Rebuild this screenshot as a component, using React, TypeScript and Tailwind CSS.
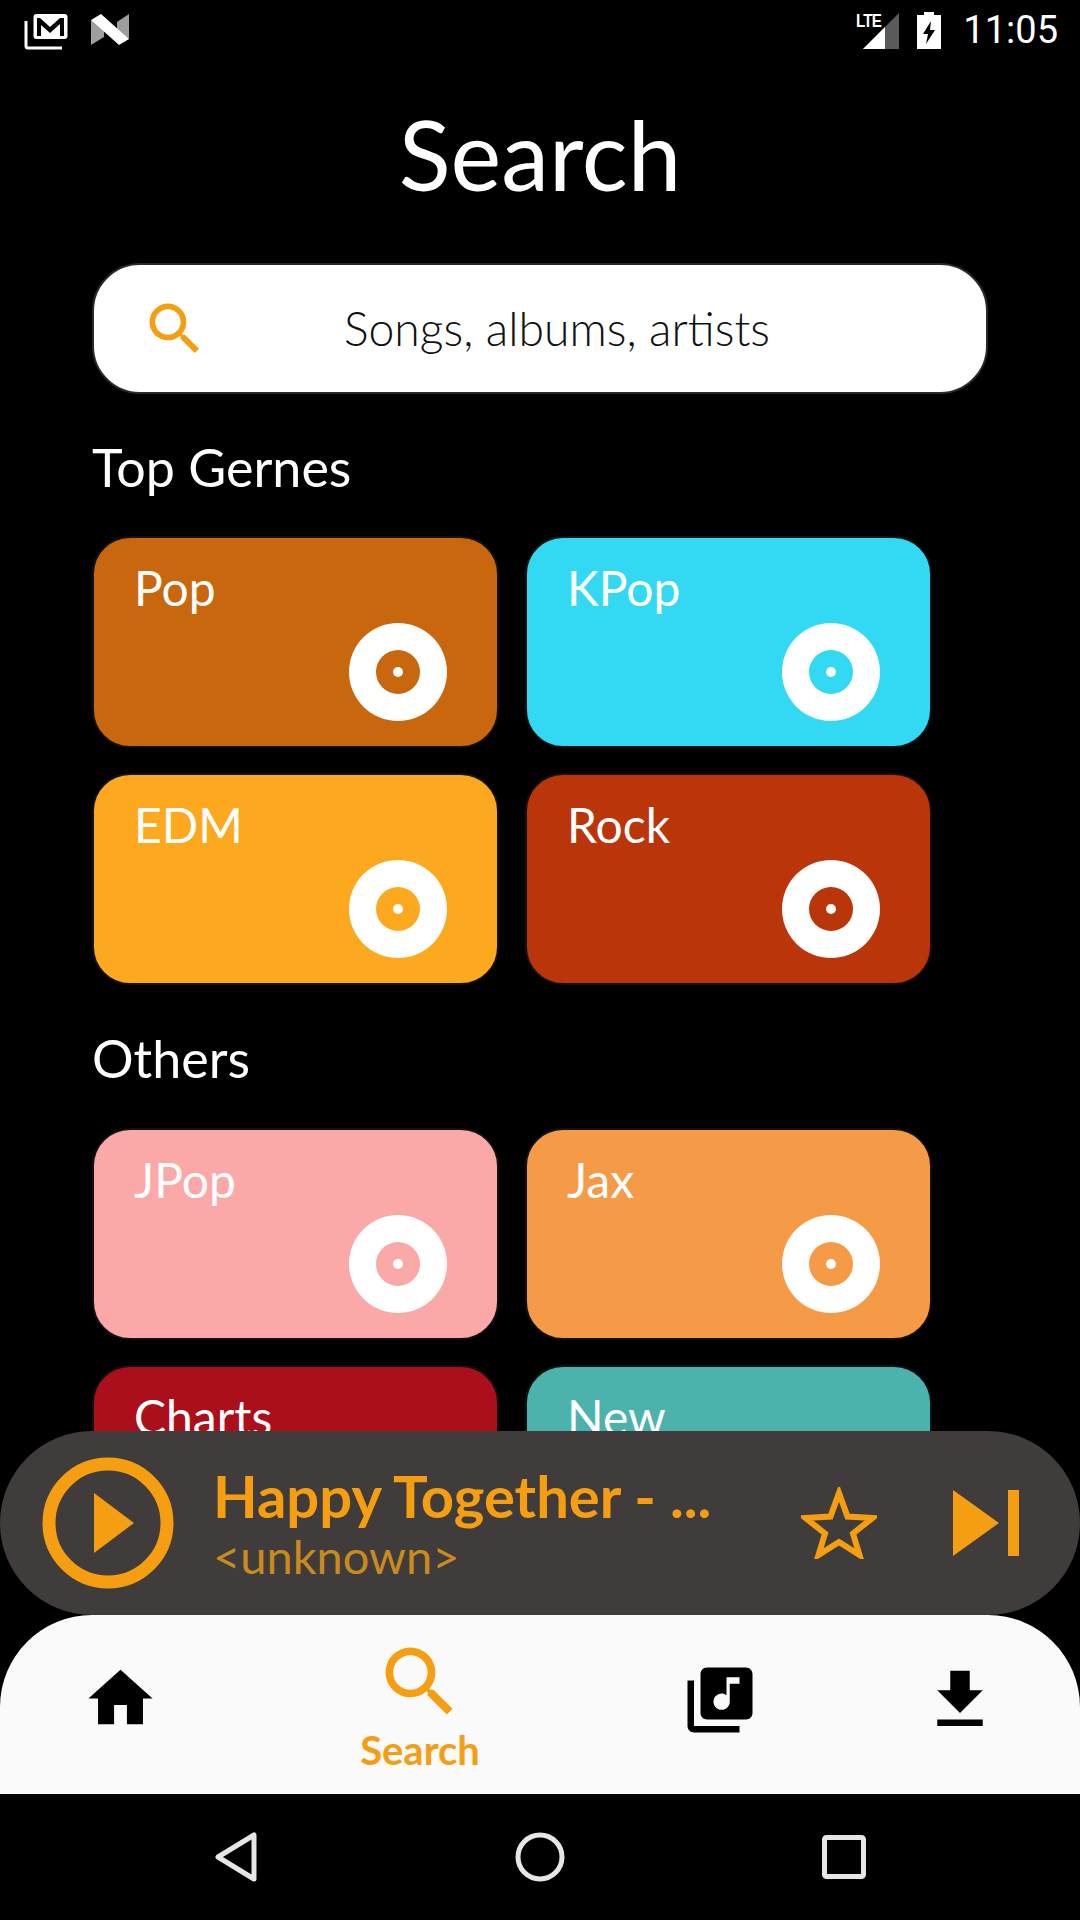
import React from 'react';

const topGenres = [
  { name: 'Pop', bg: 'bg-[#c8670d]', hole: 'bg-[#c8670d]' },
  { name: 'KPop', bg: 'bg-[#33d9f3]', hole: 'bg-[#33d9f3]' },
  { name: 'EDM', bg: 'bg-[#fda91f]', hole: 'bg-[#fda91f]' },
  { name: 'Rock', bg: 'bg-[#bb350a]', hole: 'bg-[#bb350a]' },
];

const otherGenres = [
  { name: 'JPop', bg: 'bg-[#fba8a8]', hole: 'bg-[#fba8a8]' },
  { name: 'Jax', bg: 'bg-[#f59b48]', hole: 'bg-[#f59b48]' },
  { name: 'Charts', bg: 'bg-[#ab0f1b]', hole: 'bg-[#ab0f1b]' },
  { name: 'New', bg: 'bg-[#4cb3ac]', hole: 'bg-[#4cb3ac]' },
];

const SEARCH_PATH =
  'M15.5 14h-.79l-.28-.27A6.47 6.47 0 0 0 16 9.5 6.5 6.5 0 1 0 9.5 16c1.61 0 3.09-.59 4.23-1.57l.27.28v.79l5 4.99L20.49 19l-4.99-5zm-6 0C7.01 14 5 11.99 5 9.5S7.01 5 9.5 5 14 7.01 14 9.5 11.99 14 9.5 14z';

const GenreCard: React.FC<{ name: string; bg: string; hole: string }> = ({ name, bg, hole }) => (
  <div className={`h-[212px] rounded-[38px] border-2 border-[#111111] ${bg} pl-[40px] pr-[50px] pt-[22px] flex flex-col`}>
    <span className="text-[48px] leading-[56px] text-white">{name}</span>
    <div className="mt-[7px] self-end w-[98px] h-[98px] rounded-full bg-white flex items-center justify-center">
      <div className={`w-[44px] h-[44px] rounded-full ${hole} flex items-center justify-center`}>
        <div className="w-[10px] h-[10px] rounded-full bg-white"></div>
      </div>
    </div>
  </div>
);

const StatusBar: React.FC = () => (
  <div className="h-[60px] shrink-0 flex items-center justify-between bg-black pl-[24px] pr-[22px]">
    <div className="flex items-center gap-[21px]">
      {/* stacked mail */}
      <svg width="46" height="38" viewBox="0 0 46 38" className="mt-[2px]">
        <path d="M2 9v25q0 2 2 2h34" fill="none" stroke="#fff" strokeWidth="3" />
        <rect x="9.500" y="2" width="34" height="25" rx="3" fill="#fff" />
        <path d="M13 6h3l10 9 10-9h4v18h-4V12l-10 9-9-8v11h-4z" fill="#000" />
      </svg>
      {/* N logo */}
      <svg width="38" height="31" viewBox="0 0 38 31" className="mt-[-2px]">
        <path d="M0 6v25l13-8V14z" fill="#9e9e9e" />
        <path d="M38 0v25L26 17V8z" fill="#9e9e9e" />
        <path d="M0 6l10-6 28 25-10 6z" fill="#fff" />
      </svg>
    </div>
    <div className="flex items-center">
      <div className="relative w-[46px] h-[37px] mr-[18px]">
        <svg width="36" height="36" viewBox="0 0 36 36" className="absolute right-0 bottom-0">
          <path d="M0 36L36 0v36z" fill="#5a5a5a" />
          <path d="M0 36l22-22v22z" fill="#fff" />
        </svg>
        <span className="absolute left-[3px] top-[-1px] text-[19px] leading-[20px] font-bold text-white font-['Liberation_Sans',sans-serif] tracking-[-1px] scale-x-[0.8] origin-left">
          LTE
        </span>
      </div>
      <svg width="24" height="37" viewBox="0 0 24 37" className="mr-[22px]">
        <path
          fillRule="evenodd"
          d="M7 0h10v3h7v34H0V3h7zM14 9L6 22h5l-2 10 9-14h-5z"
          fill="#fff"
        />
      </svg>
      <span className="text-[38px] leading-[44px] text-white font-['Roboto',sans-serif]">11:05</span>
    </div>
  </div>
);

const MiniPlayer: React.FC = () => (
  <div className="h-[184px] shrink-0 rounded-[92px] bg-[#403c3b] flex items-center pl-[42px]">
    <svg width="132" height="132" viewBox="0 0 132 132" className="shrink-0">
      <circle cx="66" cy="66" r="59" fill="none" stroke="#f59e11" strokeWidth="13" />
      <path d="M52 36l40 30-40 30z" fill="#f59e11" />
    </svg>
    <div className="ml-[39px] w-[520px] flex flex-col">
      <span className="text-[58px] leading-[66px] font-bold text-[#f59e11] whitespace-nowrap mt-[-2px]">Happy Together - ...</span>
      <span className="text-[47px] leading-[50px] text-[#c98a1e] whitespace-nowrap mt-[2px]">&lt;unknown&gt;</span>
    </div>
    <svg width="76" height="72" viewBox="0 0 76 72" className="shrink-0 ml-[68px]">
      <path
        d="M38 6l8.500 23.500 25 1.500-19.500 15.500 6.500 21.500L38 55 17.500 68 24 46.500 4.500 31l25-1.500z"
        fill="none"
        stroke="#f59e11"
        strokeWidth="6"
      />
    </svg>
    <svg width="66" height="66" viewBox="0 0 66 66" className="shrink-0 ml-[76px]">
      <path d="M0 0l46 33L0 66z" fill="#f59e11" />
      <rect x="55" y="0" width="11" height="66" fill="#f59e11" />
    </svg>
  </div>
);

const BottomNav: React.FC = () => (
  <div className="h-[179px] shrink-0 rounded-t-[92px] bg-[#fafafa] grid grid-cols-[240px_360px_240px_240px]">
    <div className="flex justify-center pt-[45px]">
      <svg width="77" height="77" viewBox="0 0 24 24">
        <path d="M10 20v-6h4v6h5v-8h3L12 3 2 12h3v8z" fill="#000" />
      </svg>
    </div>
    <div className="flex flex-col items-center pt-[21px]">
      <svg width="92" height="92" viewBox="0 0 24 24">
        <path d={SEARCH_PATH} fill="#f59e11" />
      </svg>
      <span className="text-[40px] leading-[44px] font-bold text-[#f59e11]">Search</span>
    </div>
    <div className="flex justify-center pt-[46px]">
      <svg width="78" height="78" viewBox="0 0 24 24">
        <path
          d="M20 2H8c-1.100 0-2 .9-2 2v12c0 1.100.9 2 2 2h12c1.100 0 2-.9 2-2V4c0-1.100-.9-2-2-2zm-2 5h-3v5.500c0 1.380-1.120 2.500-2.500 2.500S10 13.880 10 12.500s1.120-2.500 2.500-2.500c.57 0 1.080.19 1.500.51V5h4v2zM4 6H2v14c0 1.100.9 2 2 2h14v-2H4V6z"
          fill="#000"
        />
      </svg>
    </div>
    <div className="flex justify-center pt-[46px]">
      <svg width="78" height="78" viewBox="0 0 24 24">
        <path d="M19 9h-4V3H9v6H5l7 7 7-7zM5 18v2h14v-2H5z" fill="#000" />
      </svg>
    </div>
  </div>
);

const SystemNav: React.FC = () => (
  <div className="flex-1 bg-black flex items-center justify-center gap-[248px]">
    <svg width="44" height="52" viewBox="0 0 44 52">
      <path d="M40 4v44L4 26z" fill="none" stroke="#e6e6e6" strokeWidth="5" strokeLinejoin="round" />
    </svg>
    <svg width="50" height="50" viewBox="0 0 50 50" className="mx-[9px]">
      <circle cx="25" cy="25" r="22" fill="none" stroke="#e6e6e6" strokeWidth="5" />
    </svg>
    <svg width="44" height="44" viewBox="0 0 44 44">
      <rect x="2.500" y="2.500" width="39" height="39" rx="2" fill="none" stroke="#e6e6e6" strokeWidth="5" />
    </svg>
  </div>
);

const App: React.FC = () => {
  return (
    <div className="w-[1080px] h-[1920px] bg-black flex flex-col overflow-hidden font-['Lato',sans-serif]">
      <StatusBar />

      {/* scrolling content, clipped by the player */}
      <div className="h-[1371px] shrink-0 overflow-hidden px-[92px]">
        <h1 className="mt-[44px] text-center text-[96px] leading-[100px] font-normal text-white">Search</h1>

        <div className="mt-[59px] w-[896px] h-[131px] rounded-[48px] border-2 border-[#2a2a2a] bg-white flex items-center">
          <svg width="68" height="68" viewBox="0 0 24 24" className="ml-[47px] shrink-0">
            <path d={SEARCH_PATH} fill="#f59e11" />
          </svg>
          <span className="ml-[135px] text-[46.3px] font-light text-[#111] whitespace-nowrap">Songs, albums, artists</span>
        </div>

        <h2 className="mt-[43px] text-[52px] leading-[60px] font-normal text-white">Top Gernes</h2>

        <div className="mt-[39px] grid grid-cols-[407px_407px] gap-x-[26px] gap-y-[25px]">
          {topGenres.map((g) => (
            <GenreCard key={g.name} {...g} />
          ))}
        </div>

        <h2 className="mt-[43px] text-[52px] leading-[60px] font-normal text-white">Others</h2>

        <div className="mt-[40px] grid grid-cols-[407px_407px] gap-x-[26px] gap-y-[25px]">
          {otherGenres.map((g) => (
            <GenreCard key={g.name} {...g} />
          ))}
        </div>
      </div>

      <MiniPlayer />
      <BottomNav />
      <SystemNav />
    </div>
  );
};

export default App;
